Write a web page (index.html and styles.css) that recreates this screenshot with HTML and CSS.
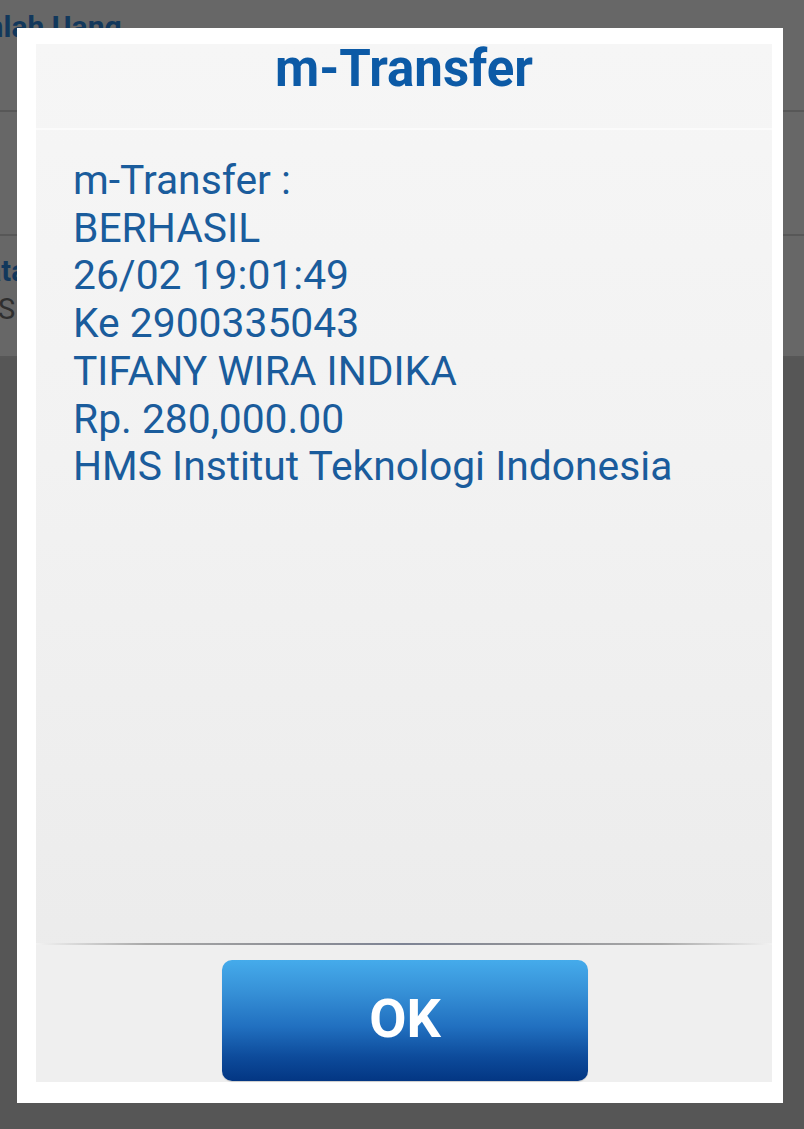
FILE: index.html
```html
<!DOCTYPE html>
<html>
<head>
<meta charset="utf-8">
<link rel="stylesheet" href="styles.css">
</head>
<body>
<div class="page">
  <div class="row row-top"><span class="bg-title">Jumlah Uang</span></div>
  <div class="row row-mid"></div>
  <div class="row row-info">
    <span class="bg-label">Data</span>
    <span class="bg-value">HMS I</span>
  </div>
  <div class="rest"></div>
</div>

<div class="dialog">
  <div class="panel">
    <div class="head">m-Transfer</div>
    <div class="body">
      <div>m-Transfer :</div>
      <div>BERHASIL</div>
      <div>26/02 19:01:49</div>
      <div>Ke 2900335043</div>
      <div>TIFANY WIRA INDIKA</div>
      <div>Rp. 280,000.00</div>
      <div>HMS Institut Teknologi Indonesia</div>
    </div>
    <div class="sep"></div>
    <div class="foot">
      <button class="ok">OK</button>
    </div>
  </div>
</div>
</body>
</html>
```

FILE: styles.css
```css
html, body {
  margin: 0;
  padding: 0;
}
body {
  width: 804px;
  height: 1129px;
  overflow: hidden;
  background: #565656;
  font-family: Roboto, "Liberation Sans", sans-serif;
  position: relative;
}
.page {
  display: flex;
  flex-direction: column;
}
.row {
  background: #676767;
  border-bottom: 2px solid #575757;
  overflow: hidden;
  white-space: nowrap;
}
.row-top {
  height: 110px;
}
.bg-title {
  display: block;
  margin-left: -56px;
  margin-top: 9px;
  font-size: 30px;
  font-weight: 700;
  color: #12385c;
}
.row-mid {
  height: 122px;
}
.row-info {
  height: 120px;
  display: flex;
  flex-direction: column;
}
.bg-label {
  display: block;
  margin-left: -33px;
  margin-top: 18px;
  font-size: 29px;
  font-weight: 700;
  color: #12385c;
}
.bg-value {
  display: block;
  margin-left: -48px;
  margin-top: 4px;
  font-size: 29px;
  color: #2f2f2f;
}
.rest {
  flex: 1;
}

.dialog {
  position: absolute;
  left: 17px;
  top: 28px;
  width: 766px;
  height: 1075px;
  box-sizing: border-box;
  background: #ffffff;
  padding: 16px 11px 21px 19px;
  display: flex;
}
.panel {
  flex: 1;
  display: flex;
  flex-direction: column;
  background: linear-gradient(to bottom, #f6f6f6 0%, #f2f2f2 40%, #ececec 85%, #e9e9e9 100%);
}
.head {
  height: 86px;
  box-sizing: border-box;
  border-bottom: 2px solid #fbfbfb;
  padding-top: 1px;
  text-align: center;
  font-size: 51px;
  line-height: 48px;
  font-weight: 700;
  color: #0c5aa6;
}
.body {
  flex: 1;
  padding: 27px 0 0 37px;
  font-size: 40.8px;
  line-height: 47.7px;
  color: #1a5c9c;
}
.sep {
  height: 2px;
  background: linear-gradient(to right, #f2f2f2 0%, #a8a8a8 15%, #8e9096 35%, #7d8394 50%, #8e9096 65%, #a8a8a8 85%, #f2f2f2 100%);
}
.foot {
  height: 137px;
  box-sizing: border-box;
  padding-top: 15px;
  display: flex;
  justify-content: center;
  align-items: flex-start;
  background: #efefef;
}
.ok {
  width: 366px;
  height: 121px;
  margin-left: 2px;
  border: none;
  border-radius: 10px;
  background: linear-gradient(to bottom, #45abeb 0%, #3792d8 25%, #2170c0 55%, #0d4b9b 80%, #033683 100%);
  color: #ffffff;
  font-family: Roboto, "Liberation Sans", sans-serif;
  font-weight: 700;
  font-size: 54px;
  padding: 0 0 4px 0;
  box-shadow: 0 1px 1px rgba(0,0,0,0.15);
}
```
